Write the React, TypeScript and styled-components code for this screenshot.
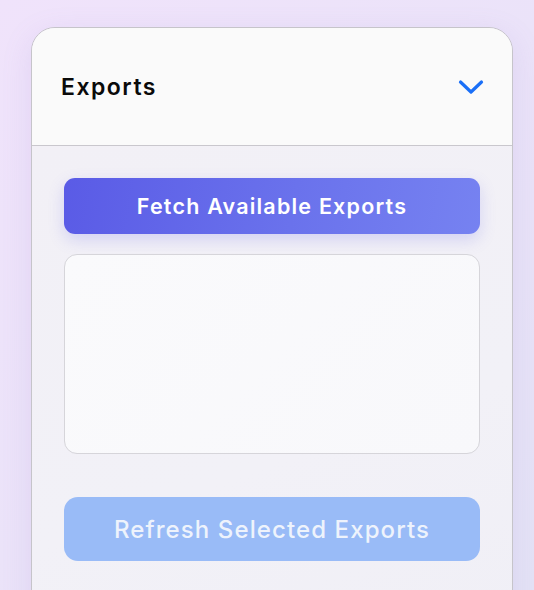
import React from "react";
import styled, { createGlobalStyle } from "styled-components";

const Global = createGlobalStyle`
  html, body { margin: 0; padding: 0; }
  body {
    font-family: Inter, "Noto Sans", sans-serif;
    background: linear-gradient(135deg, #f0e3fb 0%, #ebe3f9 50%, #e4e3f6 100%);
    min-height: 590px;
    overflow: hidden;
  }
`;

const Page = styled.div`
  padding: 27px 21px 0 31px;
  height: 590px;
  box-sizing: border-box;
`;

const Card = styled.section`
  width: 482px;
  height: 620px;
  box-sizing: border-box;
  border: 1.5px solid #c6c4ca;
  border-radius: 24px;
  overflow: hidden;
  background: #f2f0f6;
  box-shadow: 0 8px 30px rgba(150, 120, 200, 0.15);
  display: flex;
  flex-direction: column;
`;

const Header = styled.header`
  height: 118px;
  flex-shrink: 0;
  box-sizing: border-box;
  background: #fafafa;
  border-bottom: 1.5px solid #c9c7cd;
  display: flex;
  align-items: center;
  justify-content: space-between;
  padding: 0 28px 0 29px;
`;

const Title = styled.h2`
  margin: 0;
  font-size: 23px;
  font-weight: 600;
  color: #0a0a0a;
  letter-spacing: 1.5px;
  margin-top: 1px;
`;

const Body = styled.div`
  flex: 1;
  padding: 32px 32px 0 32px;
  display: flex;
  flex-direction: column;
  background: linear-gradient(160deg, #f2f0f6 0%, #f2f1f7 60%, #f0eff6 100%);
`;

const Button = styled.button<{ $variant: "primary" | "disabled" }>`
  width: 100%;
  border: none;
  font-family: inherit;
  cursor: pointer;
  padding: 0;
  ${(p) =>
    p.$variant === "primary"
      ? `
    height: 56px;
    border-radius: 11px;
    color: #ffffff;
    font-weight: 600;
    font-size: 21.5px;
    letter-spacing: 1.2px;
    background: linear-gradient(100deg, #5a5be6 0%, #6a72ec 55%, #7682f1 100%);
    box-shadow: 0 6px 16px rgba(100, 100, 230, 0.22);
  `
      : `
    height: 64px;
    border-radius: 14px;
    color: #eef3fc;
    background: #99bbf7;
    font-weight: 500;
    font-size: 24px;
    letter-spacing: 1.1px;
    cursor: default;
  `}
`;

const ListBox = styled.div`
  margin-top: 20px;
  height: 200px;
  flex-shrink: 0;
  box-sizing: border-box;
  border: 1.5px solid #d6d5da;
  border-radius: 13px;
  background: linear-gradient(135deg, #fafafc 0%, #f8f8fb 100%);
`;

const Spacer = styled.div`
  height: 43px;
  flex-shrink: 0;
`;

const Chevron = () => (
  <svg width="26" height="16" viewBox="0 0 26 16" fill="none">
    <path
      d="M2.5 3 L13 13 L23.5 3"
      stroke="#1a6ff7"
      strokeWidth="3.2"
      strokeLinecap="round"
      strokeLinejoin="round"
    />
  </svg>
);

export default function App() {
  return (
    <>
      <Global />
      <Page>
        <Card>
          <Header>
            <Title>Exports</Title>
            <Chevron />
          </Header>
          <Body>
            <Button $variant="primary">Fetch Available Exports</Button>
            <ListBox />
            <Spacer />
            <Button $variant="disabled" disabled>
              Refresh Selected Exports
            </Button>
          </Body>
        </Card>
      </Page>
    </>
  );
}
